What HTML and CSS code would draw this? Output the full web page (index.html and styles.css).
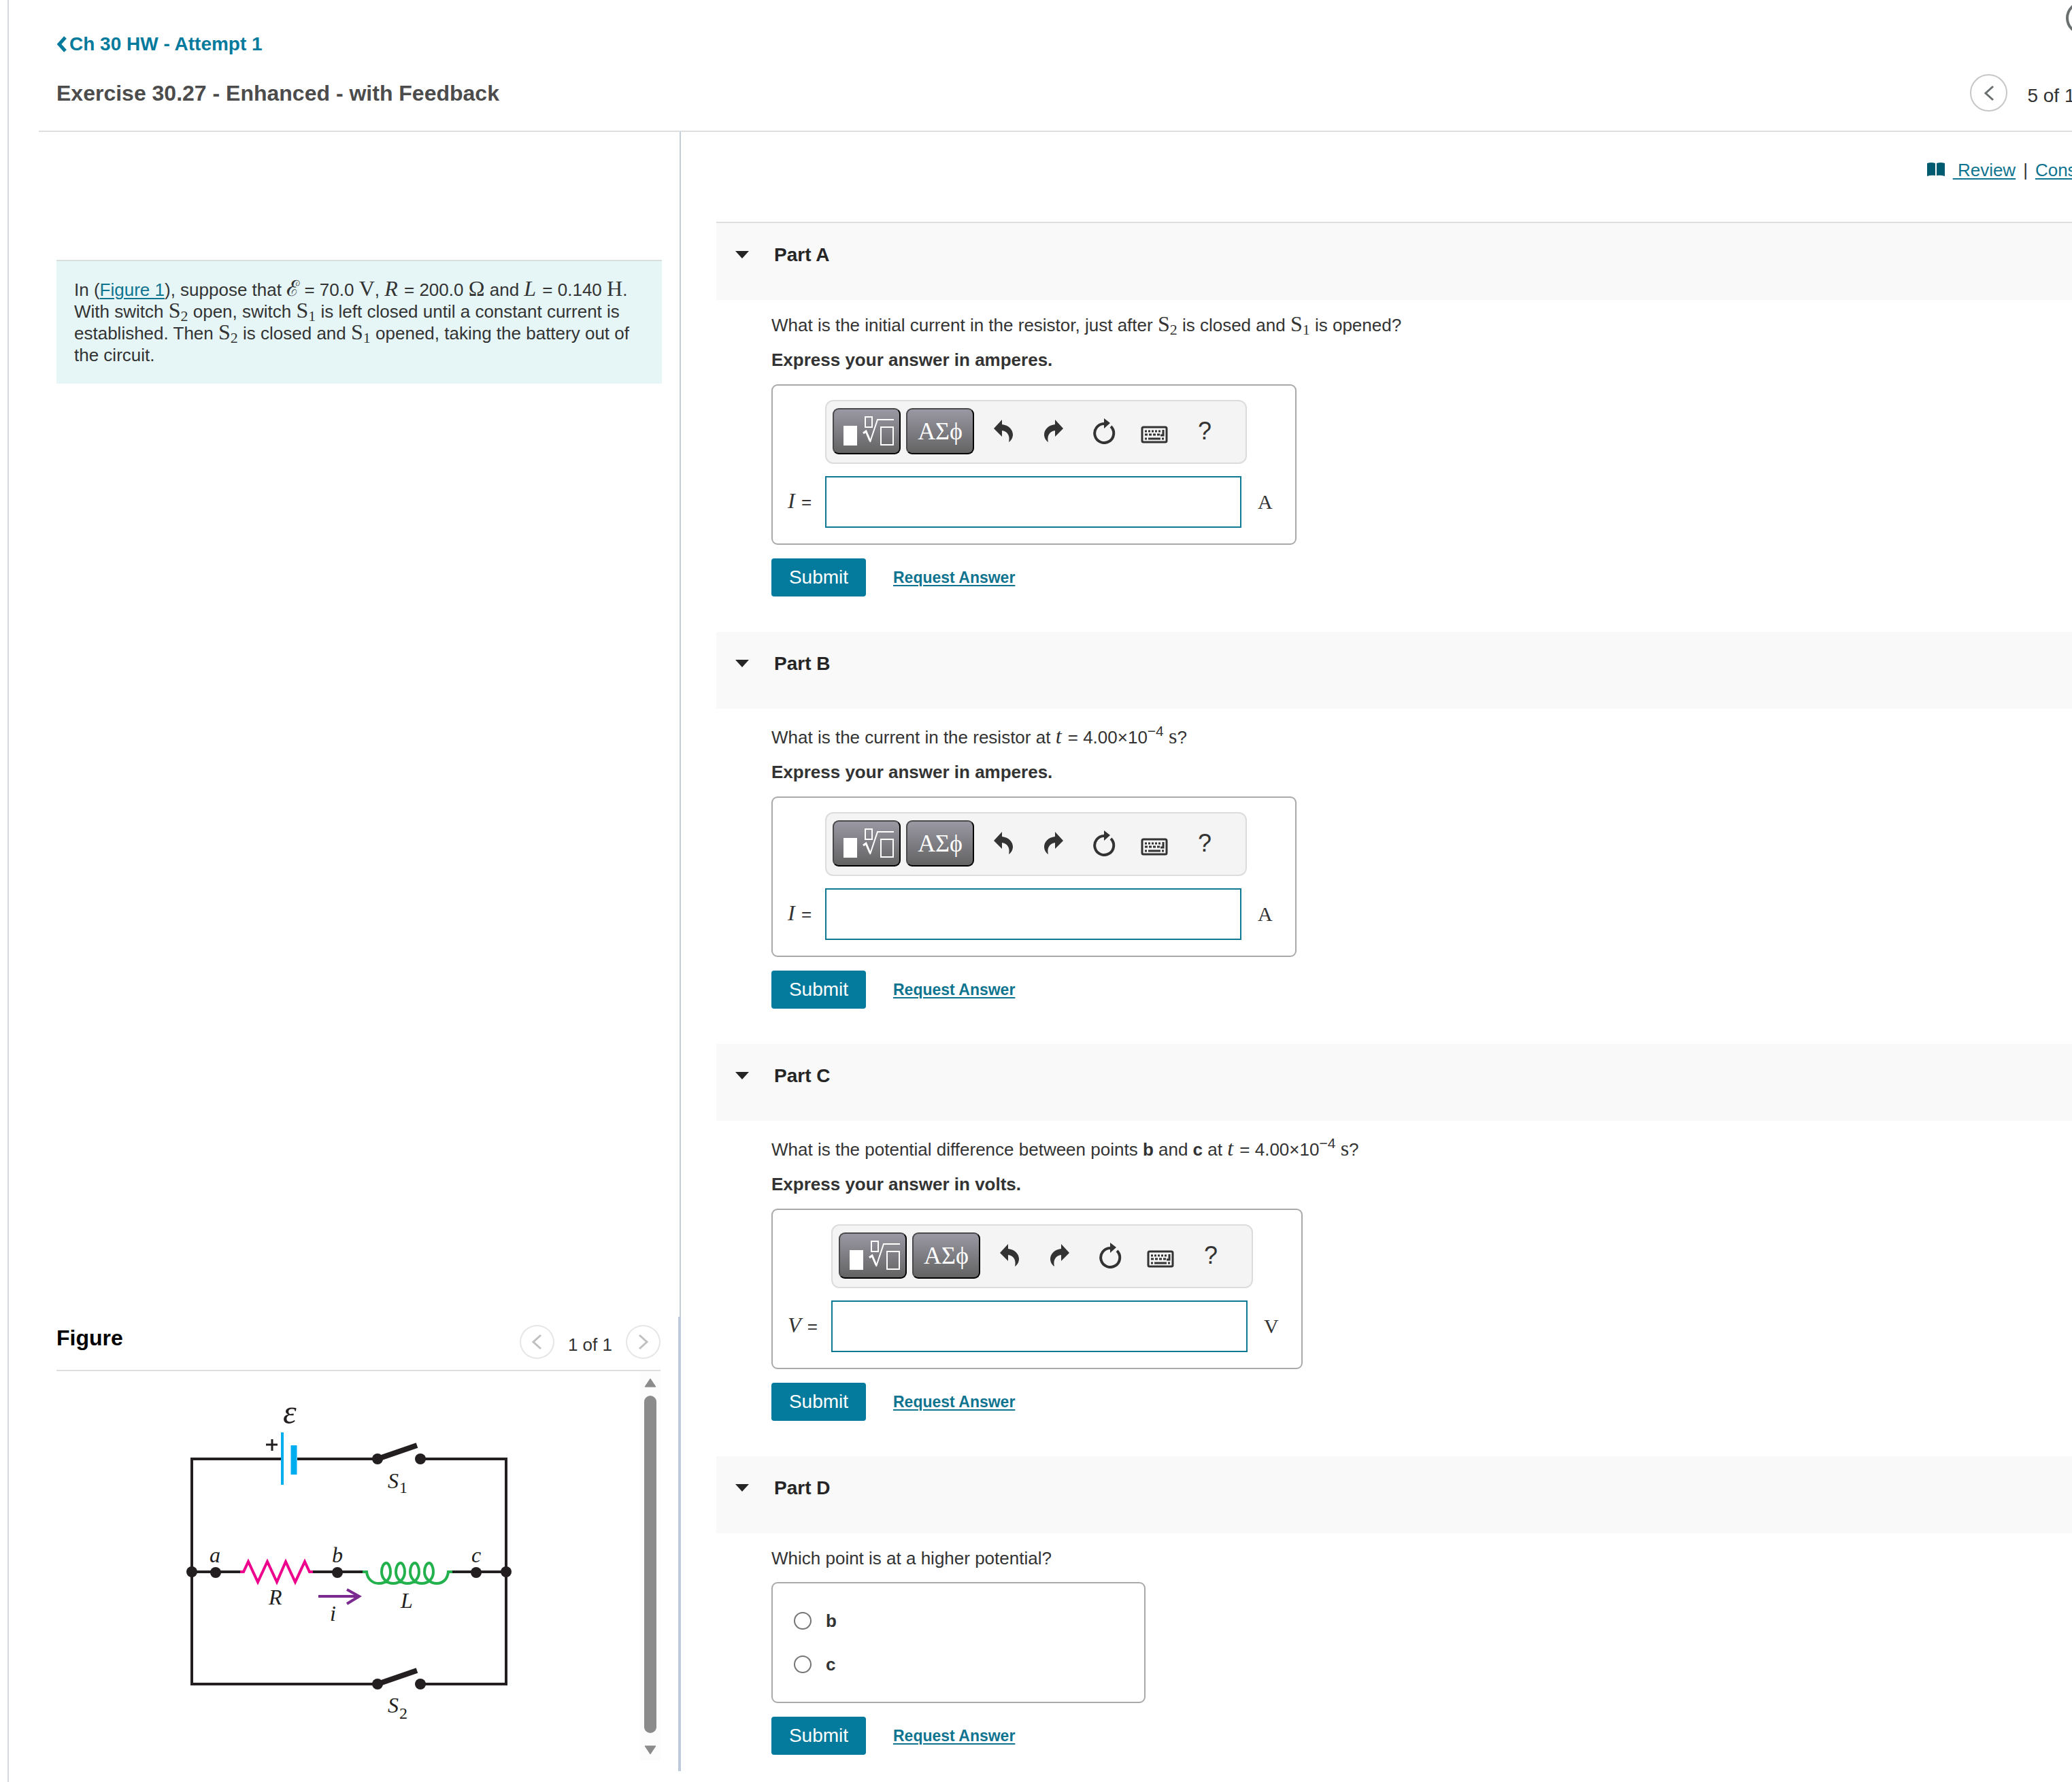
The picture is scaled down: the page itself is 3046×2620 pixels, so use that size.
FILE: index.html
```html
<!DOCTYPE html>
<html lang="en">
    <head>
        <meta charset="utf-8">
        <title>Exercise 30.27 - Enhanced - with Feedback</title>
        <link rel="stylesheet" href="styles.css">
    </head>
    <body>
        <!-- Shared icons -->
        <svg class="sprite" aria-hidden="true">
            <symbol id="icon-template" viewBox="0 0 100 68">
                <rect x="16" y="26" width="20" height="29" fill="#fff"/>
                <path d="M48 13h10v15h-10zM71 28h18v26h-18z" fill="none" stroke="#fff" stroke-width="2"/>
                <path d="M45 37l4-3 6 14" fill="none" stroke="#fff" stroke-width="3"/>
                <path d="M55 50L66 17h24" fill="none" stroke="#fff" stroke-width="2"/>
            </symbol>
            <symbol id="icon-undo" viewBox="0 0 28 34">
                <path d="M0 13L12 0v7c10 1 16 8 16 15 0 5-3 9-6 11 2-8-1-16-10-17v9z" fill="#333"/>
            </symbol>
            <symbol id="icon-redo" viewBox="0 0 28 34">
                <path d="M28 13L16 0v7C6 8 0 15 0 22c0 5 3 9 6 11-2-8 1-16 10-17v9z" fill="#333"/>
            </symbol>
            <symbol id="icon-reset" viewBox="0 0 34 38">
                <path d="M27 12A14 14 0 1 1 17 8" fill="none" stroke="#333" stroke-width="4"/>
                <path d="M17 0l9 7-9 8z" fill="#333"/>
            </symbol>
            <symbol id="icon-keyboard" viewBox="0 0 40 26">
                <rect x="2" y="2" width="36" height="22" rx="2" fill="none" stroke="#333" stroke-width="3"/>
                <path d="M6 8h24" stroke="#333" stroke-width="3" stroke-dasharray="3 2"/>
                <path d="M6 13h24" stroke="#333" stroke-width="3" stroke-dasharray="4 2"/>
                <path d="M6 19h3M11 19h18M31 19h3M33 6v8h-4" fill="none" stroke="#333" stroke-width="3"/>
            </symbol>
            <symbol id="icon-prev" viewBox="0 0 16 24">
                <path d="M14 2L3 12l11 10" fill="none" stroke="currentColor" stroke-width="3"/>
            </symbol>
            <symbol id="icon-next" viewBox="0 0 16 24">
                <path d="M2 2l11 10L2 22" fill="none" stroke="currentColor" stroke-width="3"/>
            </symbol>
            <symbol id="icon-caret" viewBox="0 0 20 11">
                <path d="M0 0h20L10 11z" fill="#252525"/>
            </symbol>
        </svg>

        <div class="page">
            <header class="page-header">
                <div class="header-top">
                    <a class="back-link" href="#"><svg width="16" height="24" viewBox="0 0 16 24"><path d="M13 2L4 12l9 10" fill="none" stroke="currentColor" stroke-width="5"/></svg>Ch 30 HW - Attempt 1</a>
                    <button class="help-button" type="button" aria-label="Help"></button>
                </div>
                <div class="header-main">
                    <h1>Exercise 30.27 - Enhanced - with Feedback</h1>
                    <nav class="item-nav">
                        <button class="circle-button" type="button" aria-label="Previous item"><svg width="16" height="24"><use href="#icon-prev"/></svg></button>
                        <span class="count">5 of 11</span>
                        <button class="circle-button" type="button" aria-label="Next item"><svg width="16" height="24"><use href="#icon-next"/></svg></button>
                    </nav>
                </div>
            </header>

            <main class="columns">
                <section class="left-column">
                    <div class="problem">
                        <p class="intro">In (<a href="#figure">Figure 1</a>), suppose that <span class="math">ℰ</span> = 70.0 <span class="math">V</span>, <i class="math">R</i> = 200.0 <span class="math">Ω</span> and <i class="math">L</i> = 0.140 <span class="math">H</span>. With switch <span class="math">S<sub>2</sub></span> open, switch <span class="math">S<sub>1</sub></span> is left closed until a constant current is established. Then <span class="math">S<sub>2</sub></span> is closed and <span class="math">S<sub>1</sub></span> opened, taking the battery out of the circuit.</p>
                    </div>

                    <div class="figure" id="figure">
                        <div class="figure-header">
                            <h2>Figure</h2>
                            <div class="figure-nav">
                                <button class="circle-button small" type="button" aria-label="Previous figure"><svg width="16" height="24"><use href="#icon-prev"/></svg></button>
                                <span class="count">1 of 1</span>
                                <button class="circle-button small" type="button" aria-label="Next figure"><svg width="16" height="24"><use href="#icon-next"/></svg></button>
                            </div>
                        </div>
                        <div class="figure-body">
                            <svg class="circuit" width="500" height="500" viewBox="0 0 500 500" role="img" aria-label="Circuit diagram">
                                <!-- wires -->
                                <g fill="none" stroke="#231f20" stroke-width="4">
                                    <path d="M154 103H22V434H295"/>
                                    <path d="M177 103H295M358 103H484V434H358"/>
                                    <path d="M22 269H95M199 269H275M404 269H484"/>
                                </g>
                                <!-- battery -->
                                <path d="M155 64V141" stroke="#00aeef" stroke-width="4"/>
                                <path d="M172 83V126" stroke="#00aeef" stroke-width="9"/>
                                <path d="M131 82H148M140 74V91" stroke="#231f20" stroke-width="3"/>
                                <!-- switches -->
                                <path d="M295 103L353 83M295 434L353 414" stroke="#231f20" stroke-width="8"/>
                                <g fill="#231f20">
                                    <circle cx="295" cy="103" r="8"/>
                                    <circle cx="358" cy="103" r="8"/>
                                    <circle cx="295" cy="434" r="8"/>
                                    <circle cx="358" cy="434" r="8"/>
                                    <circle cx="22" cy="269" r="8"/>
                                    <circle cx="57" cy="270" r="8"/>
                                    <circle cx="236" cy="270" r="8"/>
                                    <circle cx="440" cy="270" r="8"/>
                                    <circle cx="484" cy="269" r="8"/>
                                </g>
                                <!-- resistor -->
                                <path d="M93 269H98L105 254L119 284L133 254L147 284L160 254L174 284L188 254L195 269H200" fill="none" stroke="#ec008c" stroke-width="4"/>
                                <!-- inductor -->
                                <path d="M273 269H279C280 280 288 286 297 286C309 286 314 278 314 269C314 262 311 256 308 256C304 256 301 262 301 269C301 279 309 286 318 286C329 286 335 278 335 269C335 262 332 256 329 256C325 256 322 262 322 269C322 279 330 286 339 286C350 286 356 278 356 269C356 262 353 256 350 256C346 256 343 262 343 269C343 279 351 286 360 286C371 286 377 278 377 269C377 262 374 256 371 256C367 256 364 262 364 269C364 279 373 286 382 286C392 286 398 279 399 269H405" fill="none" stroke="#22b14c" stroke-width="4"/>
                                <!-- current arrow -->
                                <path d="M208 305H266M250 295L268 305L250 316" fill="none" stroke="#7b2a90" stroke-width="4"/>
                                <g class="circuit-label">
                                    <text class="emf" x="156" y="51">ε</text>
                                    <text x="310" y="146">S</text>
                                    <text class="sub" x="327" y="153">1</text>
                                    <text x="310" y="476">S</text>
                                    <text class="sub" x="327" y="485">2</text>
                                    <text x="48" y="255">a</text>
                                    <text x="228" y="255">b</text>
                                    <text x="433" y="255">c</text>
                                    <text x="135" y="317">R</text>
                                    <text x="225" y="341">i</text>
                                    <text x="329" y="322">L</text>
                                </g>
                            </svg>
                            <div class="scrollbar">
                                <svg width="18" height="14" viewBox="0 0 18 14"><path d="M9 1L17 13H1z" fill="#8b8b8b" stroke="#8b8b8b" stroke-linejoin="round"/></svg>
                                <div class="thumb"></div>
                                <svg width="18" height="14" viewBox="0 0 18 14"><path d="M9 13L17 1H1z" fill="#8b8b8b" stroke="#8b8b8b" stroke-linejoin="round"/></svg>
                            </div>
                        </div>
                    </div>
                </section>

                <section class="right-column">
                    <div class="resources">
                        <svg width="28" height="22" viewBox="0 0 28 22"><path d="M1 2Q7 0 13 2V20Q7 19 1 21zM15 2Q21 0 27 2V21Q21 19 15 20z" fill="#005a70"/></svg>
                        <a href="#">&nbsp;Review</a>
                        <span>|</span>
                        <a href="#">Constants</a>
                    </div>

                    <article class="part">
                        <div class="part-header">
                            <svg width="20" height="11"><use href="#icon-caret"/></svg>
                            <h3>Part A</h3>
                        </div>
                        <form class="part-body">
                            <p>What is the initial current in the resistor, just after <span class="math">S<sub>2</sub></span> is closed and <span class="math">S<sub>1</sub></span> is opened?</p>
                            <p class="instructions">Express your answer in amperes.</p>
                            <div class="answer">
                                <div class="toolbar">
                                    <button class="dark" type="button" aria-label="Templates"><svg width="100" height="68"><use href="#icon-template"/></svg></button>
                                    <button class="dark" type="button">ΑΣϕ</button>
                                    <button class="tool" type="button" aria-label="Undo"><svg width="28" height="34"><use href="#icon-undo"/></svg></button>
                                    <button class="tool" type="button" aria-label="Redo"><svg width="28" height="34"><use href="#icon-redo"/></svg></button>
                                    <button class="tool" type="button" aria-label="Reset"><svg width="34" height="38"><use href="#icon-reset"/></svg></button>
                                    <button class="tool low" type="button" aria-label="Keyboard shortcuts"><svg width="40" height="26"><use href="#icon-keyboard"/></svg></button>
                                    <button class="tool" type="button">?</button>
                                </div>
                                <label for="answer-a"><i class="math">I</i> =</label>
                                <input type="text" id="answer-a" name="answer-a">
                                <span class="unit">A</span>
                            </div>
                            <div class="actions">
                                <button class="submit" type="submit">Submit</button>
                                <a href="#">Request Answer</a>
                            </div>
                        </form>
                    </article>

                    <article class="part">
                        <div class="part-header">
                            <svg width="20" height="11"><use href="#icon-caret"/></svg>
                            <h3>Part B</h3>
                        </div>
                        <form class="part-body">
                            <p class="tall">What is the current in the resistor at <i class="math">t</i> = 4.00×10<sup>−4</sup> <span class="math">s</span>?</p>
                            <p class="instructions">Express your answer in amperes.</p>
                            <div class="answer">
                                <div class="toolbar">
                                    <button class="dark" type="button" aria-label="Templates"><svg width="100" height="68"><use href="#icon-template"/></svg></button>
                                    <button class="dark" type="button">ΑΣϕ</button>
                                    <button class="tool" type="button" aria-label="Undo"><svg width="28" height="34"><use href="#icon-undo"/></svg></button>
                                    <button class="tool" type="button" aria-label="Redo"><svg width="28" height="34"><use href="#icon-redo"/></svg></button>
                                    <button class="tool" type="button" aria-label="Reset"><svg width="34" height="38"><use href="#icon-reset"/></svg></button>
                                    <button class="tool low" type="button" aria-label="Keyboard shortcuts"><svg width="40" height="26"><use href="#icon-keyboard"/></svg></button>
                                    <button class="tool" type="button">?</button>
                                </div>
                                <label for="answer-b"><i class="math">I</i> =</label>
                                <input type="text" id="answer-b" name="answer-b">
                                <span class="unit">A</span>
                            </div>
                            <div class="actions">
                                <button class="submit" type="submit">Submit</button>
                                <a href="#">Request Answer</a>
                            </div>
                        </form>
                    </article>

                    <article class="part">
                        <div class="part-header">
                            <svg width="20" height="11"><use href="#icon-caret"/></svg>
                            <h3>Part C</h3>
                        </div>
                        <form class="part-body">
                            <p class="tall">What is the potential difference between points <b>b</b> and <b>c</b> at <i class="math">t</i> = 4.00×10<sup>−4</sup> <span class="math">s</span>?</p>
                            <p class="instructions">Express your answer in volts.</p>
                            <div class="answer">
                                <div class="toolbar">
                                    <button class="dark" type="button" aria-label="Templates"><svg width="100" height="68"><use href="#icon-template"/></svg></button>
                                    <button class="dark" type="button">ΑΣϕ</button>
                                    <button class="tool" type="button" aria-label="Undo"><svg width="28" height="34"><use href="#icon-undo"/></svg></button>
                                    <button class="tool" type="button" aria-label="Redo"><svg width="28" height="34"><use href="#icon-redo"/></svg></button>
                                    <button class="tool" type="button" aria-label="Reset"><svg width="34" height="38"><use href="#icon-reset"/></svg></button>
                                    <button class="tool low" type="button" aria-label="Keyboard shortcuts"><svg width="40" height="26"><use href="#icon-keyboard"/></svg></button>
                                    <button class="tool" type="button">?</button>
                                </div>
                                <label for="answer-c"><i class="math">V</i> =</label>
                                <input type="text" id="answer-c" name="answer-c">
                                <span class="unit">V</span>
                            </div>
                            <div class="actions">
                                <button class="submit" type="submit">Submit</button>
                                <a href="#">Request Answer</a>
                            </div>
                        </form>
                    </article>

                    <article class="part">
                        <div class="part-header">
                            <svg width="20" height="11"><use href="#icon-caret"/></svg>
                            <h3>Part D</h3>
                        </div>
                        <form class="part-body">
                            <p>Which point is at a higher potential?</p>
                            <div class="choices">
                                <div class="choice">
                                    <input type="radio" id="choice-b" name="point" value="b">
                                    <label for="choice-b">b</label>
                                </div>
                                <div class="choice">
                                    <input type="radio" id="choice-c" name="point" value="c">
                                    <label for="choice-c">c</label>
                                </div>
                            </div>
                            <div class="actions">
                                <button class="submit" type="submit">Submit</button>
                                <a href="#">Request Answer</a>
                            </div>
                        </form>
                    </article>
                </section>
            </main>
        </div>
    </body>
</html>
```

FILE: styles.css
```css
* {
    box-sizing: border-box;
}

body {
    font-family: "Liberation Sans", Arial, sans-serif;
    font-size: 26px;
    line-height: 32px;
    color: #333;
    background-color: #fff;
    margin: 0;
    overflow: hidden;
}

h1, h2, h3, p {
    margin: 0;
}

a {
    color: #0f748f;
    text-decoration-thickness: 2px;
    text-underline-offset: 3px;
}

button {
    font-family: inherit;
    padding: 0;
    cursor: pointer;
}

.sprite {
    display: none;
}

/* The page is wider than the window and runs off its right edge */
.page {
    display: flex;
    flex-direction: column;
    height: 100vh;
    margin-left: 11px;
    margin-right: -102px;
    padding-left: 44px;
    border-left: 2px solid #d5d8dc;
}

/* Header */
.page-header {
    padding: 2px 0 28px 26px;
    border-bottom: 2px solid #dedede;
}

.header-top {
    display: flex;
    justify-content: space-between;
    height: 79px;
    margin-bottom: 28px;
}

.back-link {
    display: flex;
    align-items: center;
    align-self: flex-end;
    gap: 3px;
    font-size: 28px;
    font-weight: bold;
    color: #047a9c;
    text-decoration: none;
}

.help-button {
    width: 49px;
    height: 49px;
    margin-right: 62px;
    border: 4px solid #6a7070;
    border-radius: 50%;
    background: none;
}

.header-main {
    display: flex;
    align-items: center;
    justify-content: space-between;
}

h1 {
    font-size: 32px;
    line-height: 36px;
    color: #4c4c4c;
}

.item-nav,
.figure-nav {
    display: flex;
    align-items: center;
    gap: 29px;
}

.item-nav {
    font-size: 28px;
}

.count {
    padding-top: 8px;
    white-space: nowrap;
}

.circle-button {
    display: flex;
    align-items: center;
    justify-content: center;
    width: 55px;
    height: 55px;
    border: 2px solid #c7c7c7;
    border-radius: 50%;
    background-color: #fff;
    color: #6a7070;
}

.circle-button.small {
    width: 51px;
    height: 50px;
    border-color: #e6e6e6;
    color: #c0c0c0;
}

/* Columns */
.columns {
    display: flex;
    flex: 1;
    min-height: 0;
}

.left-column {
    display: flex;
    flex-direction: column;
    width: 944px;
    padding-bottom: 16px;
    flex-shrink: 0;
}

.problem {
    flex: 1;
    padding: 188px 26px 0;
    border-right: 2px solid #c3ced9;
}

.intro {
    padding: 26px;
    border-top: 2px solid #d9dfdf;
    background-color: #e6f6f7;
}

.math {
    font-family: "Liberation Serif", "Times New Roman", serif;
    font-size: 32px;
    line-height: 0;
}

i.math {
    margin-right: 2px;
}

sub {
    font-size: 22px;
    line-height: 0;
    vertical-align: -5px;
}

sup {
    font-size: 21px;
    line-height: 0;
    vertical-align: 11px;
}

/* Figure */
.figure {
    padding: 12px 26px 16px;
    border-right: 4px solid #bccadb;
}

.figure-header {
    display: flex;
    justify-content: space-between;
    padding-bottom: 16px;
    border-bottom: 2px solid #dedede;
}

h2 {
    font-size: 32px;
    line-height: 38px;
    color: #000;
}

.figure-nav {
    gap: 20px;
}

.figure-body {
    display: flex;
    justify-content: space-between;
}

.circuit {
    margin: 26px 0 0 177px;
}

.circuit-label {
    font-family: "Liberation Serif", "Times New Roman", serif;
    font-size: 32px;
    font-style: italic;
    fill: #231f20;
}

.circuit-label .sub {
    font-size: 24px;
    font-style: normal;
}

.circuit-label .emf {
    font-size: 50px;
}

.scrollbar {
    display: flex;
    flex-direction: column;
    gap: 12px;
    width: 30px;
    height: 572px;
    padding: 10px 6px 8px;
    background-color: #fcfcfc;
}

.thumb {
    flex: 1;
    margin-bottom: 6px;
    border-radius: 9px;
    background-color: #8b8b8b;
}

/* Parts */
.right-column {
    flex: 1;
    padding-left: 52px;
    overflow: hidden;
}

.resources {
    display: flex;
    justify-content: flex-end;
    gap: 11px;
    height: 132px;
    padding: 40px 39px 0 0;
}

.resources svg {
    margin-top: 4px;
}

.part-header {
    display: flex;
    gap: 37px;
    height: 113px;
    padding: 31px 28px;
    background-color: #f9f9f9;
}

.part:nth-of-type(1) .part-header {
    height: 115px;
    border-top: 2px solid #dedede;
}

.part-header svg {
    margin-top: 10px;
}

h3 {
    font-size: 28px;
    line-height: 32px;
    color: #252525;
}

.part-body {
    padding: 21px 0 52px 81px;
}

.part-body .tall {
    padding-top: 5px;
}

.instructions {
    margin-top: 19px;
    font-weight: bold;
}

.answer {
    display: inline-grid;
    grid-template-columns: auto 620px auto;
    gap: 18px 16px;
    align-items: center;
    margin-top: 20px;
    padding: 21px 33px 23px 22px;
    border: 2px solid #a9a9a9;
    border-radius: 9px;
    vertical-align: top;
}

.toolbar {
    grid-column: 2;
    display: flex;
    align-items: center;
    height: 94px;
    padding: 0 9px 2px;
    border: 2px solid #dcdcdc;
    border-radius: 12px;
    background-color: #f4f4f4;
}

.dark {
    display: flex;
    align-items: center;
    justify-content: center;
    width: 100px;
    height: 68px;
    margin-right: 8px;
    border: 2px solid #000;
    border-top-color: #4a4a4c;
    border-left-color: #4a4a4c;
    border-radius: 9px;
    background: linear-gradient(#9a98a3, #636363);
    font-family: "Liberation Serif", "Times New Roman", serif;
    font-size: 36px;
    line-height: 40px;
    color: #fff;
}

.dark svg {
    flex-shrink: 0;
}

.dark + .dark {
    margin-right: 6px;
}

.tool {
    display: flex;
    align-items: center;
    justify-content: center;
    width: 74px;
    height: 68px;
    border: none;
    background: none;
    font-size: 36px;
    color: #333;
}

.tool.low {
    padding-top: 10px;
}

.answer label {
    grid-column: 1;
    padding-right: 4px;
    white-space: nowrap;
}

.answer input {
    width: 612px;
    height: 76px;
    padding: 0 12px;
    border: 2px solid #0f7892;
    font-size: 30px;
}

.unit {
    font-family: "Liberation Serif", "Times New Roman", serif;
    font-size: 30px;
}

.choices {
    width: 550px;
    margin-top: 19px;
    padding: 23px 31px;
    border: 2px solid #a9a9a9;
    border-radius: 9px;
}

.choice {
    display: flex;
    align-items: center;
    gap: 21px;
    height: 64px;
    font-weight: bold;
}

.choice input {
    appearance: none;
    width: 26px;
    height: 26px;
    margin: 0;
    border: 2px solid #767676;
    border-radius: 50%;
}

.choice input:checked {
    border: 8px solid #047a9c;
}

.actions {
    display: flex;
    align-items: center;
    gap: 40px;
    margin-top: 20px;
    font-size: 23px;
    font-weight: bold;
}

.submit {
    width: 139px;
    height: 56px;
    border: none;
    border-radius: 4px;
    background-color: #047a9c;
    font-size: 28px;
    color: #fff;
}
```
